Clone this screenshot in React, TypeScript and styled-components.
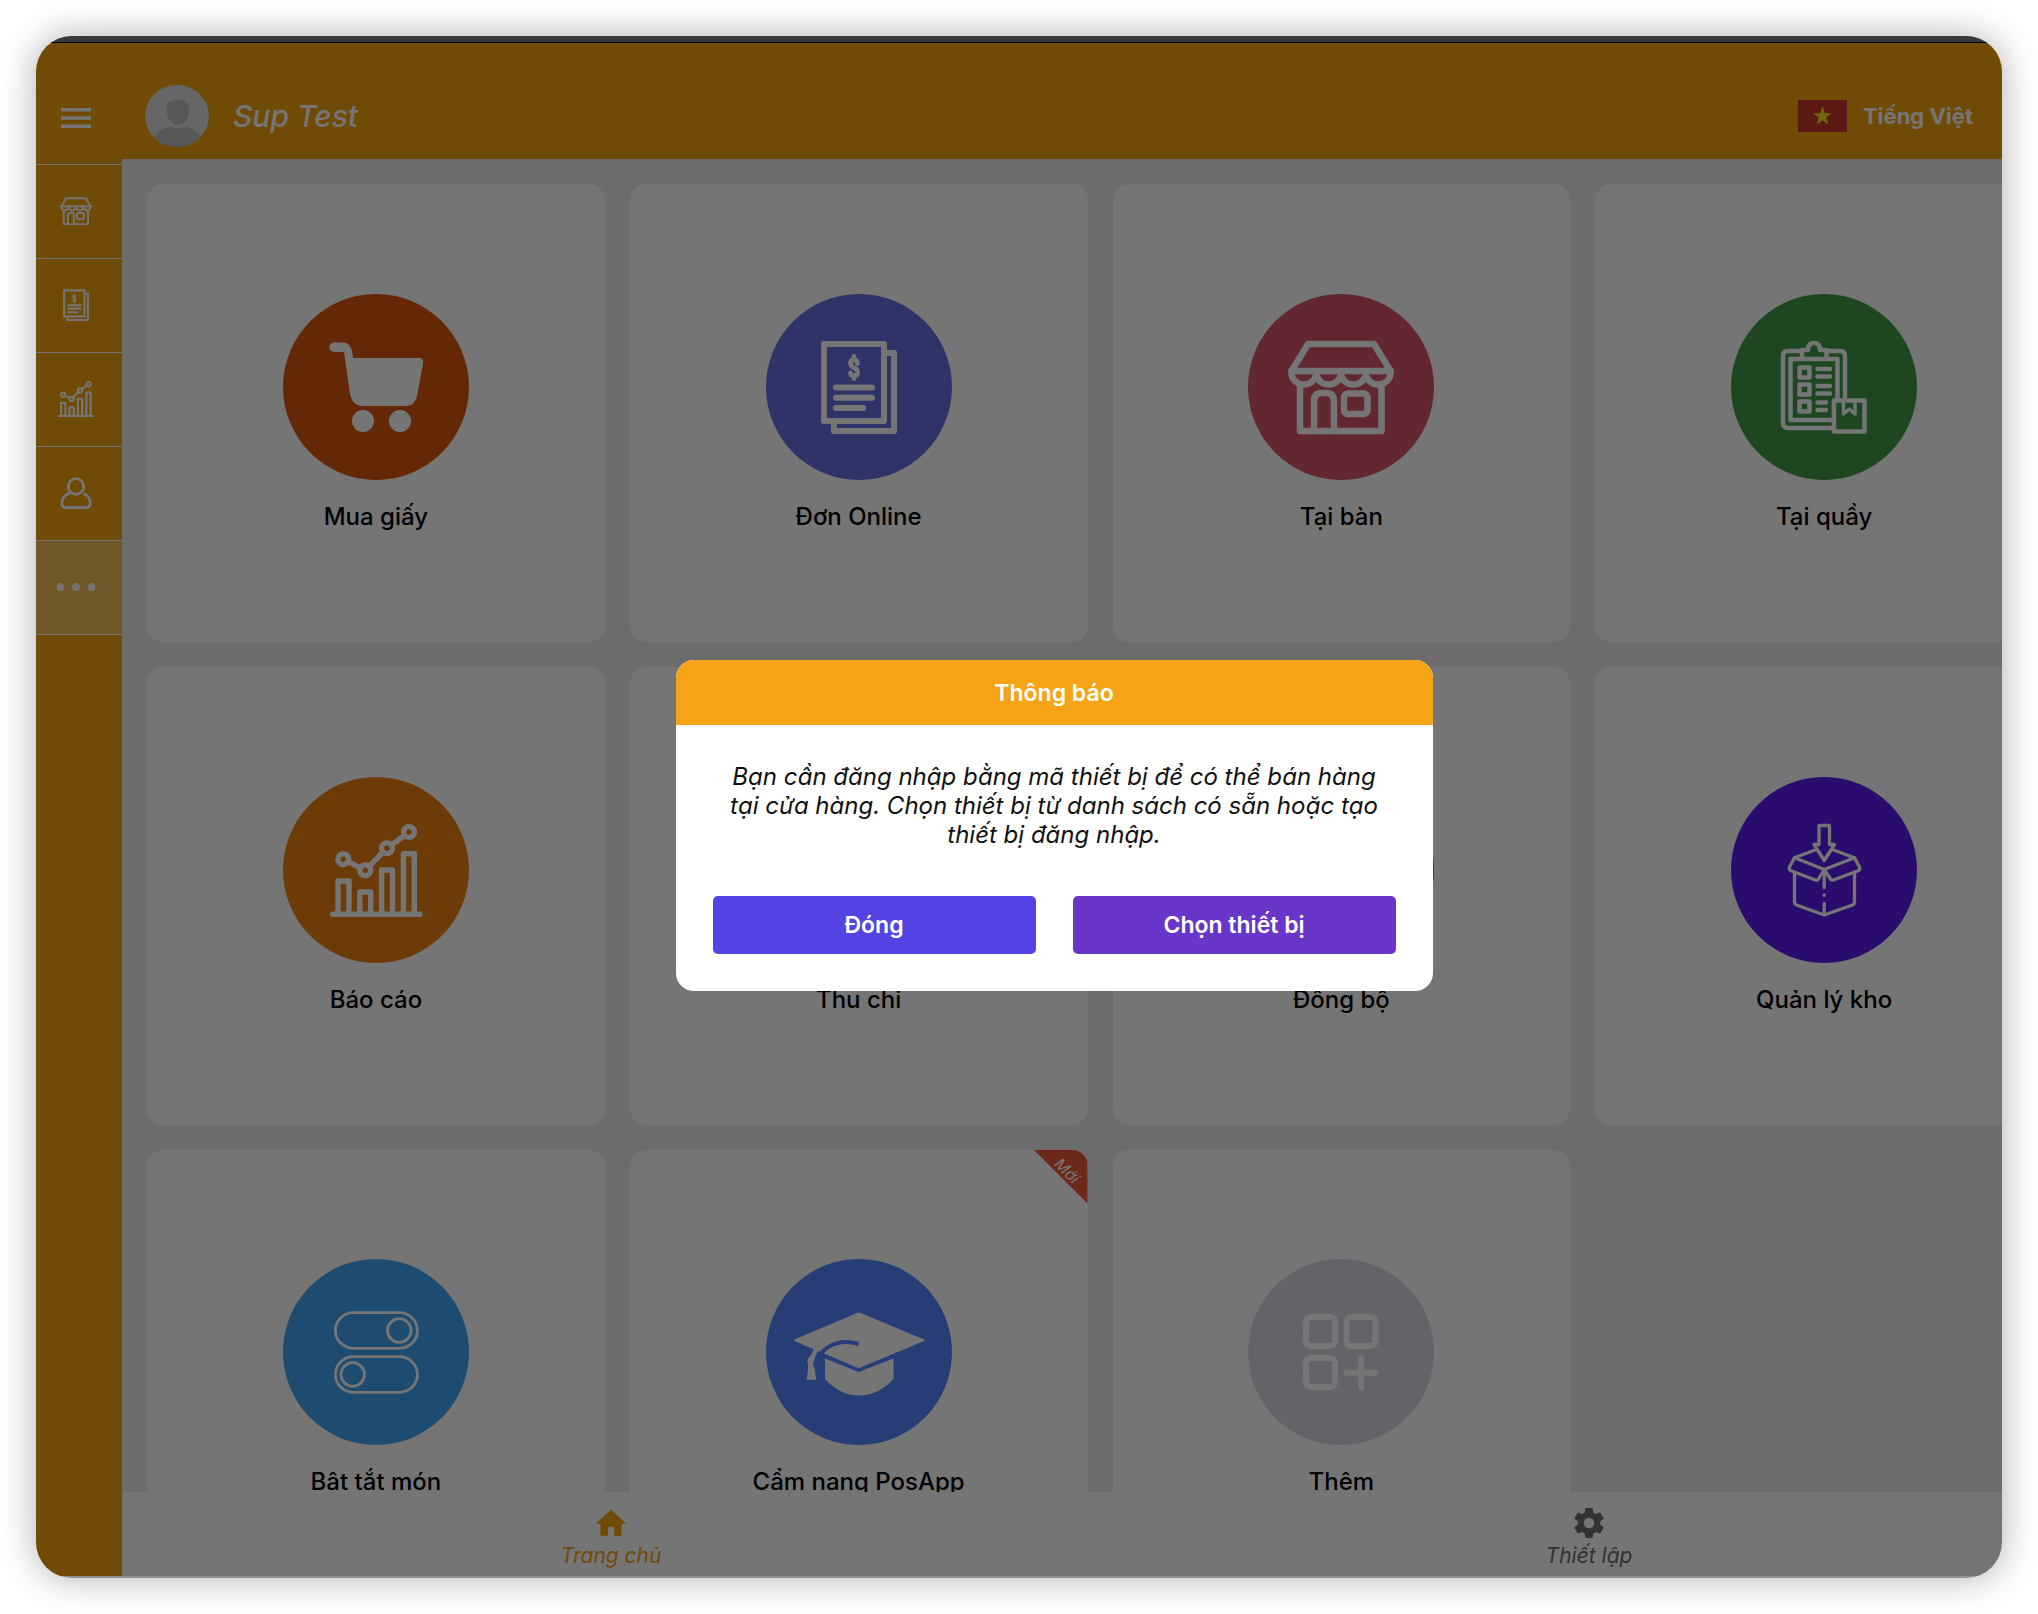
import React from "react";
import styled, { createGlobalStyle } from "styled-components";
import { RefreshCw, Wallet } from "lucide-react";

const color = {
  brand: "#f4a30c",
  brandLight: "#f1bd55",
  page: "#ebebeb",
  surface: "#ffffff",
  dim: "rgba(0, 0, 0, 0.54)",
};

const GlobalStyle = createGlobalStyle`
  *, *::before, *::after { box-sizing: border-box; }
  body {
    margin: 0;
    background: #fff;
    font-family: Inter, Roboto, "Liberation Sans", sans-serif;
  }
  button { font: inherit; border: 0; padding: 0; background: none; color: inherit; cursor: pointer; }
  a { color: inherit; text-decoration: none; }
  svg { display: block; }
`;

const Desktop = styled.div`
  height: 100vh;
  min-height: 900px;
  padding: 36px;
  display: flex;
`;

const Frame = styled.div`
  flex: 1;
  min-width: 0;
  display: flex;
  flex-direction: column;
  overflow: hidden;
  border-radius: 36px;
  background: #8f8f8f;
  box-shadow: 0 0 36px rgba(0, 0, 0, 0.32);
`;

const TitleStrip = styled.div`
  height: 7px;
  background: #383838;
  border-bottom: 1px solid #000;
`;

/* The simulated tablet is wider than the window that shows it. */
const Screen = styled.div`
  position: relative;
  flex: 1;
  min-height: 0;
  margin: 0 -76px 2px -6px;
  display: flex;
  overflow: hidden;
  background: ${color.page};
`;

const Sidebar = styled.nav`
  width: 92px;
  flex: none;
  background: ${color.brand};
  color: #fff;
  display: flex;
  flex-direction: column;
`;

const SideButton = styled.button<{ $active?: boolean }>`
  height: 94px;
  padding-bottom: 2px;
  display: flex;
  align-items: center;
  justify-content: center;
  border-bottom: 1px solid #fff;
  background: ${(p) => (p.$active ? color.brandLight : "transparent")};
`;

const MenuButton = styled(SideButton)`
  height: 122px;
  padding: 28px 0 0;
`;

const Column = styled.div`
  flex: 1;
  min-width: 0;
  display: flex;
  flex-direction: column;
`;

const Header = styled.header`
  height: 116px;
  flex: none;
  padding: 30px 105px 0 23px;
  display: flex;
  align-items: center;
  background: ${color.brand};
  color: #fff;
`;

const UserName = styled.h1`
  flex: 1;
  margin: 0 0 0 24px;
  font-size: 30px;
  line-height: 36px;
  font-weight: 500;
  font-style: italic;
`;

const Language = styled.button`
  display: flex;
  align-items: center;
  gap: 16px;
  font-size: 22px;
  line-height: 28px;
  font-weight: 700;
`;

const Main = styled.main`
  flex: 1;
  min-height: 0;
  overflow: hidden;
  padding: 25px;
`;

const Grid = styled.div`
  display: grid;
  grid-template-columns: repeat(4, 1fr);
  gap: 25px;
`;

const Card = styled.button`
  position: relative;
  aspect-ratio: 1;
  overflow: hidden;
  border-radius: 16px;
  background: ${color.surface};
  color: #000;
  display: flex;
  flex-direction: column;
  align-items: center;
  justify-content: center;
  gap: 22px;
`;

const Disc = styled.span<{ $fill: string }>`
  width: 186px;
  height: 186px;
  border-radius: 50%;
  background: ${(p) => p.$fill};
  color: #fff;
  display: flex;
  align-items: center;
  justify-content: center;
`;

const CardLabel = styled.span`
  font-size: 24px;
  line-height: 30px;
  font-weight: 500;
`;

const Ribbon = styled.span`
  position: absolute;
  top: 0;
  right: 0;
  width: 54px;
  height: 54px;
  display: flex;
  align-items: center;
  justify-content: center;
  background: #ee5838;
  clip-path: polygon(0 0, 100% 0, 100% 100%);
  color: #fff;
`;

const RibbonText = styled.span`
  font-size: 16px;
  line-height: 20px;
  font-style: italic;
  transform: rotate(45deg);
  padding-bottom: 18px;
`;

const TabBar = styled.nav`
  height: 84px;
  flex: none;
  display: grid;
  grid-template-columns: 1fr 1fr;
  background: ${color.surface};
`;

const Tab = styled.a<{ $active?: boolean }>`
  padding-top: 13px;
  display: flex;
  flex-direction: column;
  align-items: center;
  color: ${(p) => (p.$active ? color.brand : "#6e6e6e")};
  font-size: 21px;
  line-height: 30px;
  font-style: italic;
`;

const Overlay = styled.div`
  position: absolute;
  inset: 0 0 -31px 0;
  display: flex;
  align-items: center;
  justify-content: center;
  background: ${color.dim};
`;

const Dialog = styled.section`
  width: 757px;
  max-width: 90%;
  overflow: hidden;
  border-radius: 18px;
  background: ${color.surface};
`;

const DialogTitle = styled.h2`
  margin: 0;
  padding: 19px 18px 17px;
  background: #f4a416;
  color: #fff;
  text-align: center;
  font-size: 23px;
  line-height: 29px;
  font-weight: 600;
`;

const DialogBody = styled.div`
  padding: 37px;
`;

const Message = styled.p`
  margin: 0 0 47px;
  padding: 0 8px;
  color: #111;
  text-align: center;
  font-size: 24px;
  line-height: 29px;
  font-style: italic;
`;

const Actions = styled.div`
  display: grid;
  grid-template-columns: 1fr 1fr;
  gap: 37px;
`;

const ActionButton = styled.button<{ $fill: string }>`
  height: 58px;
  padding-top: 2px;
  border-radius: 5px;
  background: ${(p) => p.$fill};
  color: #fff;
  font-size: 23px;
  line-height: 29px;
  font-weight: 600;
`;

type IconProps = { w?: number; h?: number; box?: string };

const Svg = ({ w = 186, h = 186, box = "0 0 186 186", children }: IconProps & { children: React.ReactNode }) => (
  <svg
    width={w}
    height={h}
    viewBox={box}
    fill="none"
    stroke="currentColor"
    strokeLinecap="round"
    strokeLinejoin="round"
    aria-hidden="true"
  >
    {children}
  </svg>
);

const CartIcon = () => (
  <Svg>
    <g fill="currentColor" stroke="none">
      <path d="M51 48.5H61Q69 49 70 64H136Q141 64 140 69.500L134 102Q132 112 122 112H80Q69.500 112 67 100L61 58H51A4.750 4.750 0 0 1 51 48.500Z" />
      <circle cx="80" cy="127" r="11" />
      <circle cx="117" cy="127" r="11" />
    </g>
  </Svg>
);

const InvoiceIcon = (p: IconProps) => (
  <Svg {...p}>
    <g strokeWidth="6">
      <rect x="58" y="50" width="60" height="77" />
      <path d="M120 59H128V137H68V129" />
      <path d="M70 93.500H106M70 103.700H106M70 114H97" />
    </g>
    <path
      strokeWidth="4.8"
      d="M91.500 69.500Q91 66 88 66Q84.500 66 84.500 69.300Q84.500 72 88 73.700Q91.700 75.500 91.700 78.500Q91.700 81.700 88 81.700Q85 81.700 84.500 79M88 62.500V65M88 82V84.500"
    />
  </Svg>
);

const StoreIcon = (p: IconProps) => (
  <Svg {...p}>
    <g strokeWidth="6.5">
      <path d="M43.500 77L60 50H126L142.500 77Z" />
      <path d="M43.500 77v2a12.370 11.500 0 0 0 24.750 0a12.370 11.500 0 0 0 24.750 0a12.370 11.500 0 0 0 24.750 0a12.370 11.500 0 0 0 24.750 0v-2" />
      <path d="M52 91V137H133.500V91" />
      <path d="M66 137V107q0-8 8-8h4q8 0 8 8V137" />
      <rect x="96" y="99.500" width="23.500" height="20.500" rx="4" />
    </g>
  </Svg>
);

const StockListIcon = () => (
  <Svg>
    <g strokeWidth="4.5">
      <path d="M69 57H57Q52 57 52 62V129Q52 134 57 134H101M97 57H109Q114 57 114 62V104" />
      <path d="M70 65H59.500V126H101M96 65H106.500V104" />
      <path d="M71 65V56H77Q77 49 83 49Q89 49 89 56H95.500V65Z" />
      <rect x="68.500" y="73.500" width="10" height="10" />
      <rect x="68.500" y="90.500" width="10" height="10" />
      <rect x="68.500" y="107.500" width="10" height="10" />
      <path d="M86.500 75H99M86.500 82.500H99M86.500 92H99M86.500 99.500H99M86.500 108.500H95M86.500 116H95" />
      <rect x="103" y="106.500" width="30.500" height="31" />
      <path strokeWidth="3.500" d="M112.500 108V120L118.300 115L124 120V108" />
    </g>
  </Svg>
);

const ChartIcon = (p: IconProps) => (
  <Svg {...p}>
    <g strokeWidth="5.4">
      <circle cx="60.300" cy="82.300" r="5.400" />
      <circle cx="82.300" cy="93.300" r="5.400" />
      <circle cx="104" cy="71.300" r="5.400" />
      <circle cx="126" cy="55" r="5.400" />
      <path d="M65 84.700L77.500 91M86 89.500L100 75M108.500 68L121.500 58.500" />
      <path d="M49.700 137.300H137" />
      <path d="M55 137V104H66V137M76.800 137V115H87.700V137M98.600 137V93H109.500V137M120.400 137V76.700H131.300V137" />
    </g>
  </Svg>
);

const WarehouseIcon = () => (
  <Svg>
    <g strokeWidth="3.300">
      <path d="M88 48.500H98.500V67.500H103.500L93.200 83.500L83 67.500H88Z" />
      <path d="M84 73L63.500 80.700L93.200 92.500L123.500 80.700L102.500 73" />
      <path d="M63.500 80.700L58.500 90Q57.500 92.500 60 93.800L84.500 103Q86.500 103.500 87.500 102L93.200 92.500L99.500 102Q100.500 103.500 102.500 103L127 93.800Q129.500 92.500 128.500 90L123.500 80.700" />
      <path d="M63.500 96V125Q63.500 127 65.500 128L93.200 138L121.500 128Q123.500 127 123.500 125V96" />
      <path d="M93.200 94V110.500M93.200 118V118.300M93.200 126.500V137" />
    </g>
  </Svg>
);

const TogglesIcon = () => (
  <Svg>
    <g strokeWidth="2.800">
      <rect x="52.400" y="53.700" width="82" height="35.600" rx="17.800" />
      <circle cx="116.300" cy="71.500" r="11.800" />
      <rect x="52.400" y="97.700" width="82" height="35.600" rx="17.800" />
      <circle cx="69.700" cy="115.500" r="11.800" />
    </g>
  </Svg>
);

const GraduationIcon = ({ band }: { band: string }) => (
  <Svg>
    <g fill="currentColor" stroke="none">
      <path d="M91 54Q92.700 53 94.500 54L157.500 80.300Q159.500 81.300 157.500 82.300L94.500 108.500Q92.700 109.300 91 108.500L29 82.300Q27 81.300 29 80.300Z" />
      <path d="M59 99.500L92.700 113L127.500 99.500V120Q112 136.500 93 136.500Q74 136.500 59 120Z" />
    </g>
    <path stroke={band} strokeWidth="4" strokeLinecap="butt" d="M92.500 85C78 80.500 61 84 54.500 96" />
    <path
      fill="currentColor"
      stroke="none"
      d="M48 89L60 84.500Q50 92 48.500 100L47 104Q49.500 111 50 120.700H40.500Q42.500 111 42 105Q40.500 102 42 99.500Q46 96 48 89Z"
    />
  </Svg>
);

const AddTileIcon = () => (
  <Svg>
    <g strokeWidth="6">
      <rect x="58" y="58" width="29" height="29" rx="5" />
      <rect x="98.500" y="58" width="29" height="29" rx="5" />
      <rect x="58" y="99" width="29" height="29" rx="5" />
      <path d="M113 99V128.500M98.500 113.700H127.500" />
    </g>
  </Svg>
);

const PersonIcon = () => (
  <Svg w={32} h={32} box="0 0 32 32">
    <g strokeWidth="2.800">
      <circle cx="16" cy="9.500" r="7.800" />
      <path d="M10.500 16.200C5 17.500 1.800 21 1.800 26.500Q1.800 30.500 6 30.500H26Q30.200 30.500 30.200 26.500C30.200 21.500 28 18.500 24.500 17" />
    </g>
  </Svg>
);

const MenuIcon = () => (
  <Svg w={30} h={20} box="0 0 30 20">
    <path strokeWidth="3.400" strokeLinecap="butt" d="M0 1.700H30M0 10H30M0 18.300H30" />
  </Svg>
);

const DotsIcon = () => (
  <Svg w={40} h={8} box="0 0 40 8">
    <g fill="currentColor" stroke="none">
      <circle cx="4.500" cy="4" r="4" />
      <circle cx="20" cy="4" r="4" />
      <circle cx="35.500" cy="4" r="4" />
    </g>
  </Svg>
);

const Avatar = () => (
  <svg width="64" height="62" viewBox="0 0 64 62" aria-hidden="true">
    <defs>
      <clipPath id="avatar-edge">
        <ellipse cx="32" cy="31" rx="32" ry="31" />
      </clipPath>
    </defs>
    <g clipPath="url(#avatar-edge)">
      <rect width="64" height="62" fill="#dedede" />
      <path fill="#bcbdbf" d="M21.500 25C21.500 17 26 14.800 33 14.800S44 17 44 25S39.500 40 33 40S21.500 33 21.500 25Z" />
      <path fill="#bcbdbf" d="M9 62V54Q11 46 24 41.500Q33 45 42 41.500Q54 46 56 54V62Z" />
    </g>
  </svg>
);

const Flag = () => (
  <svg width="49" height="32" viewBox="0 0 49 32" aria-hidden="true">
    <rect width="49" height="32" fill="#c9372b" />
    <path
      fill="#f5e11a"
      d="M24.500 6L26.700 13.200H34L28.100 17.500L30.400 24.500L24.500 20.200L18.600 24.500L20.900 17.500L15 13.200H22.300Z"
    />
  </svg>
);

const HomeIcon = () => (
  <svg width="36" height="36" viewBox="0 0 24 24" fill="currentColor" aria-hidden="true">
    <path d="M10 20.500v-6h4v6h5v-8h3L12 3 2 12.500h3v8z" />
  </svg>
);

const GearIcon = () => (
  <svg width="36" height="36" viewBox="0 0 24 24" fill="currentColor" aria-hidden="true">
    <path d="M12 15.500A3.500 3.500 0 0 1 8.500 12 3.500 3.500 0 0 1 12 8.500a3.500 3.500 0 0 1 3.500 3.500 3.500 3.500 0 0 1-3.500 3.500m7.430-2.530c.04-.32.07-.64.07-.97s-.03-.66-.07-1l2.110-1.630c.19-.15.24-.42.12-.64l-2-3.460c-.12-.22-.39-.31-.61-.22l-2.490 1c-.52-.39-1.060-.73-1.690-.98l-.37-2.650A.506.506 0 0 0 14 2h-4c-.25 0-.46.18-.5.42l-.37 2.650c-.63.25-1.170.59-1.690.98l-2.490-1c-.22-.09-.49 0-.61.22l-2 3.460c-.13.22-.07.49.12.64L4.570 11c-.04.34-.07.67-.07 1s.03.65.07.97l-2.110 1.660c-.19.15-.25.42-.12.64l2 3.460c.12.22.39.300.61.220l2.490-1.010c.52.400 1.060.740 1.690.990l.37 2.650c.04.240.25.420.5.420h4c.25 0 .46-.18.5-.42l.37-2.650c.63-.26 1.170-.59 1.690-.99l2.490 1.010c.22.080.49 0 .61-.22l2-3.460c.12-.22.07-.49-.12-.64z" />
  </svg>
);

const cards: { label: string; fill: string; icon: React.ReactNode; isNew?: boolean }[] = [
  { label: "Mua giấy", fill: "#d95711", icon: <CartIcon /> },
  { label: "Đơn Online", fill: "#6871e2", icon: <InvoiceIcon /> },
  { label: "Tại bàn", fill: "#d55566", icon: <StoreIcon /> },
  { label: "Tại quầy", fill: "#3f9a48", icon: <StockListIcon /> },
  { label: "Báo cáo", fill: "#eb8011", icon: <ChartIcon /> },
  { label: "Thu chi", fill: "#2f9e8f", icon: <Wallet size={92} /> },
  { label: "Đồng bộ", fill: "#e0326e", icon: <RefreshCw size={92} /> },
  { label: "Quản lý kho", fill: "#5d1cef", icon: <WarehouseIcon /> },
  { label: "Bật tắt món", fill: "#41a5f3", icon: <TogglesIcon /> },
  { label: "Cẩm nang PosApp", fill: "#5585ff", icon: <GraduationIcon band="#5585ff" />, isNew: true },
  { label: "Thêm", fill: "#d7d9e4", icon: <AddTileIcon /> },
];

const sideItems: { name: string; icon: React.ReactNode; active?: boolean }[] = [
  { name: "Tại bàn", icon: <StoreIcon w={32} h={28} box="40 46 106 94" /> },
  { name: "Đơn Online", icon: <InvoiceIcon w={26} h={32} box="55 46 76 94" /> },
  { name: "Báo cáo", icon: <ChartIcon w={36} h={36} box="47 47 93 93" /> },
  { name: "Tài khoản", icon: <PersonIcon /> },
  { name: "Thêm", icon: <DotsIcon />, active: true },
];

export default function App() {
  return (
    <>
      <GlobalStyle />
      <Desktop>
        <Frame>
          <TitleStrip />
          <Screen>
            <Sidebar>
              <MenuButton aria-label="Menu">
                <MenuIcon />
              </MenuButton>
              {sideItems.map((item) => (
                <SideButton key={item.name} aria-label={item.name} $active={item.active}>
                  {item.icon}
                </SideButton>
              ))}
            </Sidebar>
            <Column>
              <Header>
                <Avatar />
                <UserName>Sup Test</UserName>
                <Language>
                  <Flag />
                  Tiếng Việt
                </Language>
              </Header>
              <Main>
                <Grid>
                  {cards.map((card) => (
                    <Card key={card.label}>
                      <Disc $fill={card.fill}>{card.icon}</Disc>
                      <CardLabel>{card.label}</CardLabel>
                      {card.isNew && (
                        <Ribbon>
                          <RibbonText>Mới</RibbonText>
                        </Ribbon>
                      )}
                    </Card>
                  ))}
                </Grid>
              </Main>
              <TabBar>
                <Tab href="#home" $active>
                  <HomeIcon />
                  Trang chủ
                </Tab>
                <Tab href="#settings">
                  <GearIcon />
                  Thiết lập
                </Tab>
              </TabBar>
            </Column>
            <Overlay>
              <Dialog role="dialog" aria-modal="true" aria-labelledby="notice-title">
                <DialogTitle id="notice-title">Thông báo</DialogTitle>
                <DialogBody>
                  <Message>
                    Bạn cần đăng nhập bằng mã thiết bị để có thể bán hàng tại cửa hàng. Chọn thiết bị từ danh sách có
                    sẵn hoặc tạo thiết bị đăng nhập.
                  </Message>
                  <Actions>
                    <ActionButton $fill="#5544e4">Đóng</ActionButton>
                    <ActionButton $fill="#6936c9">Chọn thiết bị</ActionButton>
                  </Actions>
                </DialogBody>
              </Dialog>
            </Overlay>
          </Screen>
        </Frame>
      </Desktop>
    </>
  );
}
